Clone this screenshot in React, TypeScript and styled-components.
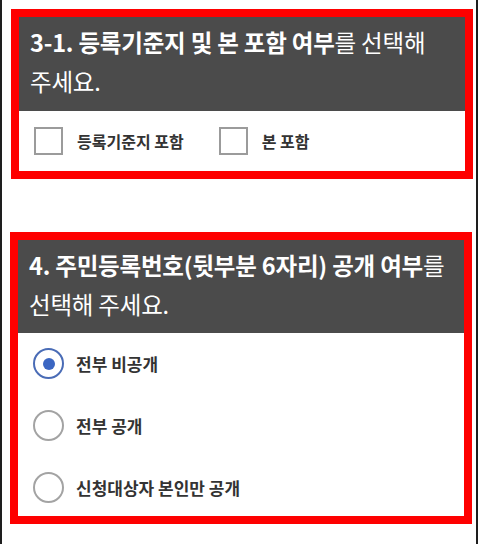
import React from "react";
import styled, { createGlobalStyle } from "styled-components";

const Global = createGlobalStyle`
  html, body { margin: 0; padding: 0; background: #ffffff; }
  body { font-family: "Noto Sans CJK KR", "Noto Sans", sans-serif; }
`;

const Frame = styled.div`
  width: 474px;
  height: 544px;
  border-left: 2px solid #1e1e1e;
  border-right: 2px solid #1e1e1e;
  background: #ffffff;
  padding-top: 9px;
  box-sizing: content-box;
  display: flex;
  flex-direction: column;
  gap: 53px;
`;

const Box = styled.section<{ $left: number }>`
  margin-left: ${(p) => p.$left}px;
  width: 462px;
  box-sizing: border-box;
  border: 8px solid #fe0000;
  background: #ffffff;
`;

const Header = styled.h2<{ $h: number }>`
  margin: 0;
  height: ${(p) => p.$h}px;
  box-sizing: border-box;
  background: #4b4b4b;
  color: #ffffff;
  font-size: 23.5px;
  line-height: 39px;
  font-weight: 400;
  padding: 6px 8px 0 11px;
  letter-spacing: -0.2px;
  word-break: keep-all;
  b { font-weight: 700; }
`;

const CheckRow = styled.div`
  height: 60px;
  display: flex;
  align-items: center;
  padding-left: 15px;
`;

const CheckItem = styled.label<{ $gap: number }>`
  display: flex;
  align-items: center;
  margin-right: ${(p) => p.$gap}px;
`;

const Square = styled.span`
  width: 29px;
  height: 28px;
  box-sizing: border-box;
  border: 2px solid #9b9b9b;
  background: #ffffff;
  margin-right: 14px;
`;

const Label = styled.span`
  font-size: 16px;
  font-weight: 700;
  color: #333333;
`;

const RadioList = styled.div`
  display: flex;
  flex-direction: column;
  gap: 31px;
  padding: 15px 0 13px 15px;
`;

const RadioItem = styled.label`
  display: flex;
  align-items: center;
  height: 31px;
`;

const Circle = styled.span<{ $on?: boolean }>`
  width: 31px;
  height: 31px;
  box-sizing: border-box;
  border-radius: 50%;
  border: 2.5px solid ${(p) => (p.$on ? "#4a6cb6" : "#a3a3a3")};
  display: flex;
  align-items: center;
  justify-content: center;
  margin-right: 12px;
  &::after {
    content: "";
    display: ${(p) => (p.$on ? "block" : "none")};
    width: 12px;
    height: 12px;
    border-radius: 50%;
    background: #3b66c2;
  }
`;

const RadioLabel = styled.span`
  font-size: 17px;
  font-weight: 700;
  color: #333333;
`;

const radios = [
  { text: "전부 비공개", on: true },
  { text: "전부 공개", on: false },
  { text: "신청대상자 본인만 공개", on: false },
];

export default function App() {
  return (
    <>
      <Global />
      <Frame>
        <Box $left={9}>
          <Header $h={94}>
            <b>3-1. 등록기준지 및 본 포함 여부</b>를 선택해 주세요.
          </Header>
          <CheckRow>
            <CheckItem $gap={35}>
              <Square />
              <Label>등록기준지 포함</Label>
            </CheckItem>
            <CheckItem $gap={0}>
              <Square />
              <Label>본 포함</Label>
            </CheckItem>
          </CheckRow>
        </Box>
        <Box $left={8}>
          <Header $h={93}>
            <b>4. 주민등록번호(뒷부분 6자리) 공개 여부</b>를 선택해 주세요.
          </Header>
          <RadioList>
            {radios.map((r) => (
              <RadioItem key={r.text}>
                <Circle $on={r.on} />
                <RadioLabel>{r.text}</RadioLabel>
              </RadioItem>
            ))}
          </RadioList>
        </Box>
      </Frame>
    </>
  );
}
